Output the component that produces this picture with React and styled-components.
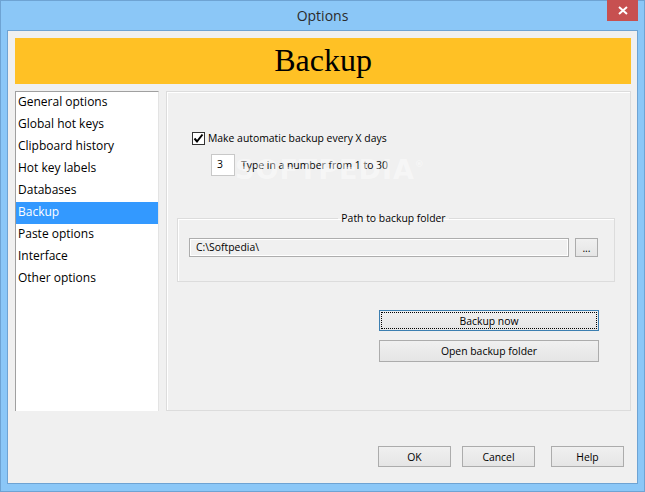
import styled, { createGlobalStyle } from 'styled-components';

const GlobalStyle = createGlobalStyle`
  html, body {
    margin: 0;
    padding: 0;
    background: #8bc7f7;
  }
  * { box-sizing: border-box; }
`

const Frame = styled.div`
  width: 645px;
  height: 492px;
  background: #8bc7f7;
  border: 1px solid #6ea3d3;
  padding: 0 6px 7px 6px;
  display: flex;
  flex-direction: column;
  font-family: "Open Sans", "Noto Sans", sans-serif;
  font-size: 12px;
  color: #000;
`
const TitleBar = styled.div`
  position: relative;
  height: 29px;
  display: flex;
  align-items: center;
  justify-content: center;
  font-size: 14px;
  color: #2b2b2b;
`
const CloseBox = styled.div`
  position: absolute;
  top: -1px;
  right: 0px;
  width: 31px;
  height: 21px;
  background: #c75050;
  display: flex;
  align-items: center;
  justify-content: center;
`
const Client = styled.div`
  flex: 1;
  background: #f0f0f0;
  border: 1px solid #6ea3d3;
  padding: 7px 6px 0 7px;
  display: flex;
  flex-direction: column;
`
const Banner = styled.div`
  height: 46px;
  background: #ffc125;
  display: flex;
  align-items: center;
  justify-content: center;
  font-family: "Liberation Serif", "Times New Roman", serif;
  font-size: 32px;
  color: #000;
  padding-bottom: 1px;
`
const Body = styled.div`
  display: flex;
  gap: 7px;
  margin-top: 7px;
  height: 320px;
`
const List = styled.div`
  width: 144px;
  background: #fff;
  border-top: 1px solid #a0a0a0;
  border-left: 1px solid #a0a0a0;
  border-right: 1px solid #e3e3e3;
  display: flex;
  flex-direction: column;
`
const ListItem = styled.div`
  height: 22px;
  line-height: 20px;
  padding-left: 2px;
  white-space: nowrap;
  background: ${p => (p.$active ? '#3399ff' : 'transparent')};
  color: ${p => (p.$active ? '#fff' : '#000')};
`
const Panel = styled.div`
  position: relative;
  flex: 1;
  border: 1px solid #dcdcdc;
  box-shadow: inset 1px 1px 0 #fff;
  padding-top: 39px;
  display: flex;
  flex-direction: column;
  font-size: 10.4px;
`
const CheckRow = styled.label`
  display: flex;
  align-items: center;
  gap: 3px;
  padding-left: 25px;
  height: 14px;
`
const CheckBox = styled.span`
  width: 13px;
  height: 13px;
  border: 1px solid #333;
  background: #fff;
  display: flex;
  align-items: center;
  justify-content: center;
`
const NumberRow = styled.div`
  display: flex;
  align-items: center;
  gap: 6px;
  padding-left: 44px;
  margin-top: 9px;
`
const NumberBox = styled.div`
  width: 24px;
  height: 22px;
  background: #fff;
  border: 1px solid #c8c8c8;
  padding: 1px 0 0 5px;
  line-height: 17px;
`
const Group = styled.fieldset`
  width: 438px;
  margin: 34px 0 0 10px;
  padding: 12px 16px 24px 11px;
  border: 1px solid #dcdcdc;
  box-shadow: inset 1px 1px 0 #fff;
  display: flex;
  gap: 6px;
  min-width: 0;
`
const Legend = styled.legend`
  margin: 0 auto;
  padding: 0 3px;
  line-height: 16px;
`
const PathField = styled.div`
  flex: 1;
  height: 19px;
  border: 1px solid #adadad;
  box-shadow: inset 1px 1px 0 #fff, inset -1px -1px 0 #fff;
  background: #f0f0f0;
  padding-left: 6px;
  line-height: 17px;
`
const Button = styled.div`
  width: ${p => p.$w || 73}px;
  height: ${p => p.$h || 21}px;
  border: 1px solid ${p => (p.$focus ? '#3c7fb1' : '#acacac')};
  background: linear-gradient(#f0f0f0, #e5e5e5);
  display: flex;
  align-items: center;
  justify-content: center;
  font-size: 10.4px;
  margin-left: ${p => p.$ml || 0}px;
  ${p => p.$focus && 'outline: 1px dotted #000; outline-offset: -3px;'}
`
const ActionStack = styled.div`
  display: flex;
  flex-direction: column;
  gap: 9px;
  margin: 28px 0 0 212px;
`
const Footer = styled.div`
  display: flex;
  justify-content: flex-end;
  padding-right: 7px;
  margin-top: 35px;
`
const Watermark = styled.div`
  position: absolute;
  left: 68px;
  top: 62px;
  font-family: "DejaVu Sans", sans-serif;
  font-weight: bold;
  font-size: 27px;
  letter-spacing: 1px;
  color: rgba(255, 255, 255, 0.45);
  pointer-events: none;
  & sup { font-size: 9px; vertical-align: 12px; }
`

const items = [
  'General options',
  'Global hot keys',
  'Clipboard history',
  'Hot key labels',
  'Databases',
  'Backup',
  'Paste options',
  'Interface',
  'Other options',
]

function App() {
  return (
    <>
      <GlobalStyle />
      <Frame>
        <TitleBar>
          Options
          <CloseBox>
            <svg width="10" height="9" viewBox="0 0 10 9">
              <path d="M1 1 L9 8 M9 1 L1 8" stroke="#fff" strokeWidth="2" />
            </svg>
          </CloseBox>
        </TitleBar>
        <Client>
          <Banner>Backup</Banner>
          <Body>
            <List>
              {items.map(it => (
                <ListItem key={it} $active={it === 'Backup'}>{it}</ListItem>
              ))}
            </List>
            <Panel>
              <Watermark>SOFTPEDIA<sup>®</sup></Watermark>
              <CheckRow>
                <CheckBox>
                  <svg width="11" height="11" viewBox="0 0 11 11">
                    <path d="M1.5 5.5 L4 8.5 L9.5 1.5" stroke="#000" strokeWidth="2" fill="none" />
                  </svg>
                </CheckBox>
                Make automatic backup every X days
              </CheckRow>
              <NumberRow>
                <NumberBox>3</NumberBox>
                Type in a number from 1 to 30
              </NumberRow>
              <Group>
                <Legend>Path to backup folder</Legend>
                <PathField>{'C:\\Softpedia\\'}</PathField>
                <Button $w={23} $h={19}>...</Button>
              </Group>
              <ActionStack>
                <Button $w={220} $h={21} $focus>Backup now</Button>
                <Button $w={220} $h={22}>Open backup folder</Button>
              </ActionStack>
            </Panel>
          </Body>
          <Footer>
            <Button>OK</Button>
            <Button $ml={11}>Cancel</Button>
            <Button $ml={16}>Help</Button>
          </Footer>
        </Client>
      </Frame>
    </>
  )
}

export default App
